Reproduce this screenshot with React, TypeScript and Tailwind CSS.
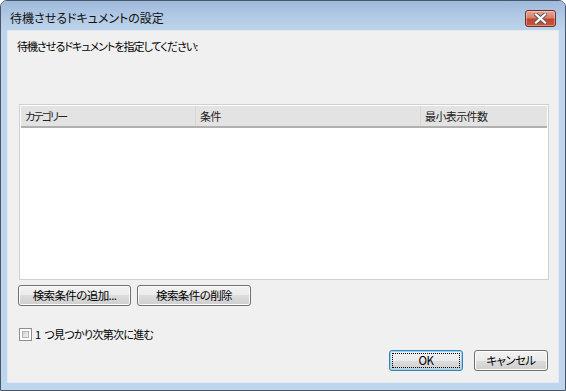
import React from "react";

const font = "font-['Noto_Sans_CJK_JP','Noto_Sans',sans-serif] [font-feature-settings:'palt']";

function WinButton({ children, focused, className }: { children: React.ReactNode; focused?: boolean; className: string }) {
  return (
    <div
      className={`${className} h-[21px] rounded-[3px] border ${
        focused ? "border-[#3c7fb1] shadow-[inset_0_0_0_1px_#8fd5f5]" : "border-[#707070] shadow-[inset_0_0_0_1px_#fcfcfc]"
      } bg-[linear-gradient(to_bottom,#f2f2f2_0%,#ebebeb_50%,#dddddd_50%,#cfcfcf_100%)] flex items-center justify-center p-[2px]`}
    >
      <div
        className={`w-full h-full flex items-center justify-center text-[11.5px] tracking-[-0.6px] leading-none text-black ${
          focused ? "border border-dotted border-black" : ""
        }`}
      >
        {children}
      </div>
    </div>
  );
}

export default function App() {
  return (
    <div className={`w-[566px] h-[391px] ${font} bg-[#bfd5ed] border border-[#4a5666] rounded-t-[7px] flex flex-col overflow-hidden`}>
      {/* title bar */}
      <div className="h-[29px] shrink-0 bg-[linear-gradient(to_bottom,#9fbadb,#b3cbe6_60%,#bcd3eb)] flex items-start pl-[9px] pr-[9px]">
        <div className="pt-[9px] text-[12px] leading-[16px] text-[#111]">待機させるドキュメントの設定</div>
        <div className="ml-auto mt-[9px] w-[31px] h-[17px] rounded-[3px] border border-[#6e2f26] bg-[linear-gradient(to_bottom,#e6a596_0%,#d7806b_45%,#c2452f_55%,#c9553c_100%)] shadow-[inset_0_0_0_1px_rgba(255,255,255,0.35)] flex items-center justify-center">
          <svg width="13" height="11" viewBox="0 0 13 11">
            <path d="M2 1.5 L11 9.5 M11 1.5 L2 9.5" stroke="#5a5a5a" strokeWidth="4" strokeLinecap="square" />
            <path d="M2 1.5 L11 9.5 M11 1.5 L2 9.5" stroke="#ffffff" strokeWidth="2.2" strokeLinecap="square" />
          </svg>
        </div>
      </div>
      {/* body with side frames */}
      <div className="flex-1 flex px-[6px] pb-[7px]">
        <div className="flex-1 bg-[#f0f0f0] border border-[#e2e9f1] flex flex-col">
          <div className="pl-[9px] pt-[8px] text-[11px] tracking-[-1px] leading-[14px] text-black">待機させるドキュメントを指定してください:</div>
          {/* list */}
          <div className="ml-[11px] mr-[9px] mt-[51px] h-[176px] border border-[#d0d0d0] bg-white flex flex-col">
            <div className="h-[22px] mx-[1px] mt-[1px] bg-[#e3e3e3] border-b-[2px] border-[#b0b0b0] flex text-[11px] tracking-[-0.6px] text-[#222]">
              <div className="w-[175px] border-r border-[#d6d6d6] flex items-center pl-[4px] tracking-[-1.8px]">カテゴリー</div>
              <div className="w-[225px] border-r border-[#d6d6d6] flex items-center pl-[4px]">条件</div>
              <div className="flex-1 flex items-center pl-[4px]">最小表示件数</div>
            </div>
          </div>
          {/* add/remove buttons */}
          <div className="flex gap-[6px] ml-[10px] mt-[5px]">
            <WinButton className="w-[113px]">検索条件の追加...</WinButton>
            <WinButton className="w-[114px]">検索条件の削除</WinButton>
          </div>
          {/* checkbox */}
          <div className="flex items-center ml-[11px] mt-[21px] gap-[3px]">
            <div className="w-[13px] h-[13px] border border-[#8e8f8f] bg-white p-[2px]">
              <div className="w-full h-full bg-[linear-gradient(135deg,#cbcfd5,#f6f6f6)] border border-[#aeb3b9]" />
            </div>
            <div className="text-[11px] tracking-[-0.7px] leading-[14px] text-black">1<span className="ml-[4px]">つ見つかり次第次に進む</span></div>
          </div>
          {/* ok/cancel */}
          <div className="flex justify-end gap-[11px] mr-[10px] mt-[9px]">
            <WinButton focused className="w-[74px]">OK</WinButton>
            <WinButton className="w-[74px]">キャンセル</WinButton>
          </div>
        </div>
      </div>
    </div>
  );
}
